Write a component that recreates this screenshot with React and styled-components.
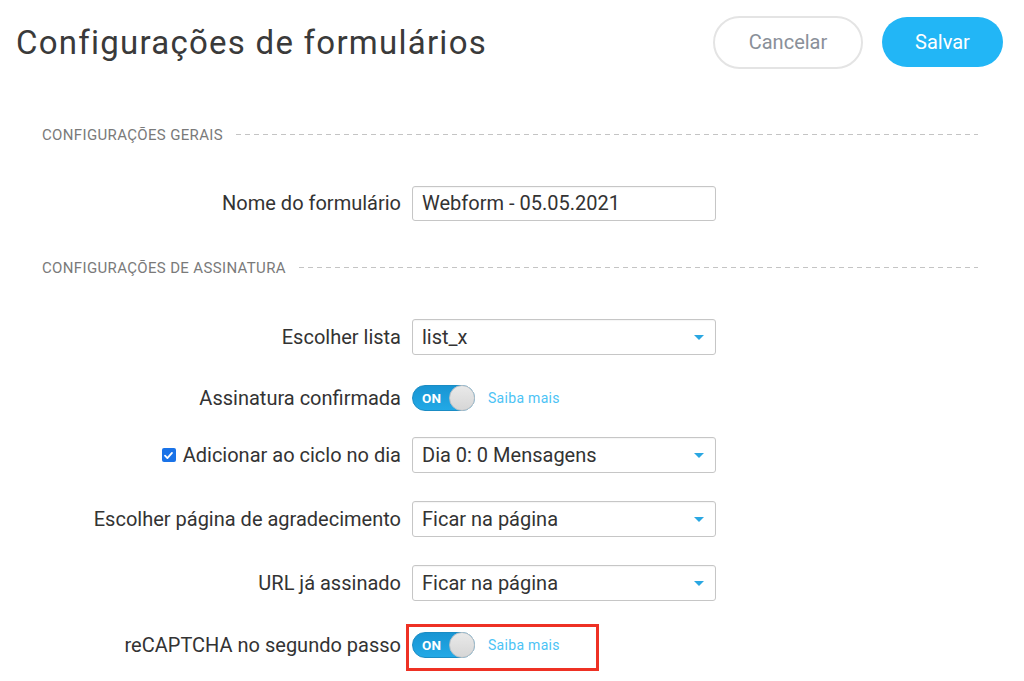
import React from "react";
import styled, { createGlobalStyle } from "styled-components";

const Global = createGlobalStyle`
  html, body { margin: 0; padding: 0; background: #fff; }
  body { font-family: Roboto, "Liberation Sans", Arial, sans-serif; color: #333; }
  * { box-sizing: border-box; }
`;

const Page = styled.div`
  width: 1024px;
  height: 681px;
  overflow: hidden;
  padding-top: 15px;
`;

const Header = styled.header`
  display: flex;
  align-items: center;
  justify-content: space-between;
  height: 54px;
  padding: 0 21px 0 16px;
`;

const Title = styled.h1`
  margin: 0;
  font-size: 33px;
  font-weight: 400;
  letter-spacing: 1.25px;
  color: #3a3a3a;
`;

const Actions = styled.div`
  display: flex;
  align-items: center;
  gap: 19px;
`;

const Button = styled.button`
  font-family: Roboto, "Liberation Sans", Arial, sans-serif;
  font-size: 20px;
  border-radius: 27px;
  cursor: pointer;
  padding: 0;
  ${(p) =>
    p.$primary
      ? `
    width: 121px; height: 50px;
    background: #22b6f6; color: #fff; border: none;
  `
      : `
    width: 150px; height: 53px;
    background: #fff; color: #8a9099; border: 2px solid #e4e4e4;
  `}
`;

const Content = styled.div`
  padding: 0 46px 0 42px;
`;

const SectionHeader = styled.div`
  display: flex;
  align-items: center;
  gap: 13px;
  height: 18px;
  margin-top: ${(p) => p.$mt}px;
  font-size: 15px;
  letter-spacing: 0.35px;
  color: #7a7a7a;
  text-transform: uppercase;
  white-space: nowrap;
  &::after {
    content: "";
    flex: 1;
    height: 1px;
    margin-top: -1px;
    background: repeating-linear-gradient(
      to right,
      #c4c4c4 0 5px,
      transparent 5px 9px
    );
  }
`;

const Row = styled.div`
  display: grid;
  grid-template-columns: 359px 304px;
  column-gap: 11px;
  align-items: center;
  height: 36px;
  margin-top: ${(p) => p.$mt}px;
`;

const Label = styled.label`
  display: flex;
  align-items: center;
  justify-content: flex-end;
  gap: 7px;
  font-size: 20px;
  color: #333;
  white-space: nowrap;
`;

const TextInput = styled.div`
  height: 35px;
  border: 1px solid #c6c6c6;
  border-radius: 3px;
  padding: 0 9px;
  display: flex;
  align-items: center;
  font-size: 20px;
  color: #333;
  box-shadow: inset 0 1px 1px rgba(0, 0, 0, 0.04);
`;

const Select = styled(TextInput)`
  height: 36px;
  justify-content: space-between;
  padding-right: 11px;
`;

const Caret = styled.span`
  width: 0;
  height: 0;
  border-left: 5px solid transparent;
  border-right: 5px solid transparent;
  border-top: 5px solid #2aa7e2;
`;

const ToggleLine = styled.div`
  display: flex;
  align-items: center;
  gap: 13px;
  position: relative;
  height: 26px;
  ${(p) =>
    p.$highlight &&
    `
    &::before {
      content: "";
      position: absolute;
      left: -6px;
      top: -8px;
      width: 187px;
      height: 41px;
      border: 3px solid #ee3124;
      pointer-events: none;
    }
  `}
`;

const Toggle = styled.div`
  position: relative;
  width: 63px;
  height: 26px;
  border-radius: 13px;
  background: linear-gradient(#1995d3, #22a9e6);
  border: 1px solid #1a8cc4;
  display: flex;
  align-items: center;
  padding-left: 9px;
  font-size: 13.5px;
  font-weight: 700;
  color: #fff;
  letter-spacing: 0.3px;
`;

const Knob = styled.span`
  position: absolute;
  right: -1px;
  top: -1px;
  width: 26px;
  height: 26px;
  border-radius: 50%;
  background: linear-gradient(#e9e9e9, #d6d6d6);
  border: 1px solid #b9c0c6;
`;

const Link = styled.a`
  font-size: 14px;
  letter-spacing: 0.3px;
  color: #4cc3f5;
  text-decoration: none;
`;

const Check = styled.span`
  width: 14px;
  height: 14px;
  border-radius: 2px;
  background: #1a73e8;
  display: inline-flex;
  align-items: center;
  justify-content: center;
`;

function CheckBox() {
  return (
    <Check>
      <svg width="11" height="11" viewBox="0 0 12 12">
        <path d="M2.2 6.2 L4.8 8.8 L9.8 3.2" fill="none" stroke="#fff" strokeWidth="2" strokeLinecap="round" strokeLinejoin="round" />
      </svg>
    </Check>
  );
}

function SwitchOn({ highlight }) {
  return (
    <ToggleLine $highlight={highlight}>
      <Toggle>
        ON
        <Knob />
      </Toggle>
      <Link href="#">Saiba mais</Link>
    </ToggleLine>
  );
}

function SelectBox({ value }) {
  return (
    <Select>
      {value}
      <Caret />
    </Select>
  );
}

export default function App() {
  return (
    <Page>
      <Global />
      <Header>
        <Title>Configurações de formulários</Title>
        <Actions>
          <Button>Cancelar</Button>
          <Button $primary>Salvar</Button>
        </Actions>
      </Header>
      <Content>
        <SectionHeader $mt={57}>Configurações gerais</SectionHeader>
        <Row $mt={41}>
          <Label>Nome do formulário</Label>
          <TextInput>Webform - 05.05.2021</TextInput>
        </Row>
        <SectionHeader $mt={38}>Configurações de assinatura</SectionHeader>
        <Row $mt={42}>
          <Label>Escolher lista</Label>
          <SelectBox value="list_x" />
        </Row>
        <Row $mt={25}>
          <Label>Assinatura confirmada</Label>
          <SwitchOn />
        </Row>
        <Row $mt={21}>
          <Label>
            <CheckBox />
            Adicionar ao ciclo no dia
          </Label>
          <SelectBox value="Dia 0: 0 Mensagens" />
        </Row>
        <Row $mt={28}>
          <Label>Escolher página de agradecimento</Label>
          <SelectBox value="Ficar na página" />
        </Row>
        <Row $mt={28}>
          <Label>URL já assinado</Label>
          <SelectBox value="Ficar na página" />
        </Row>
        <Row $mt={26}>
          <Label>reCAPTCHA no segundo passo</Label>
          <SwitchOn highlight />
        </Row>
      </Content>
    </Page>
  );
}
